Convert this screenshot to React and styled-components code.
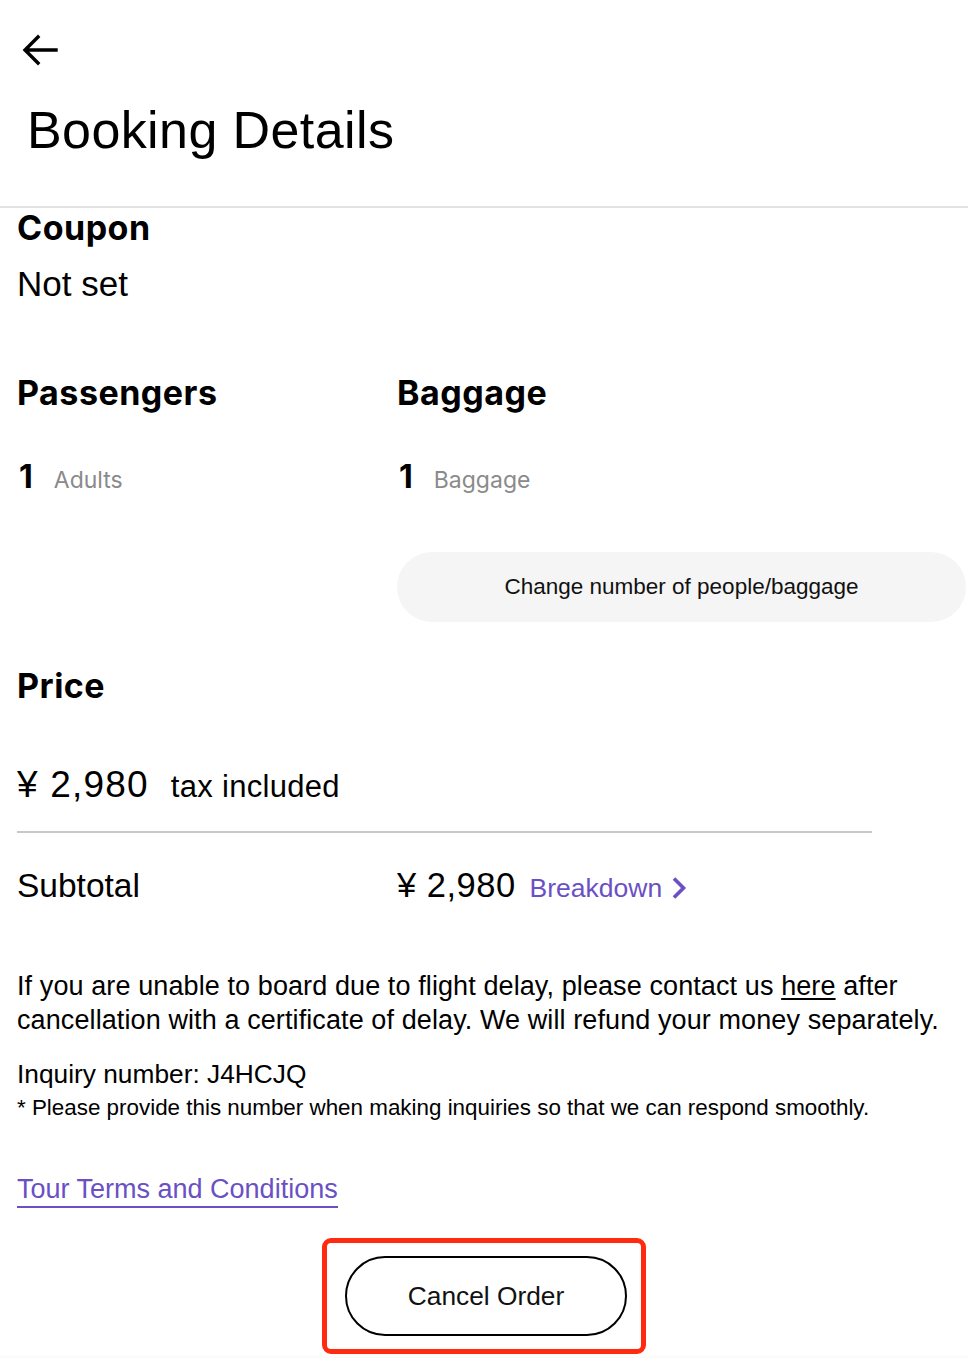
import React from "react";
import styled, { createGlobalStyle } from "styled-components";

const GlobalStyle = createGlobalStyle`
  body {
    margin: 0;
    background: #ffffff;
    color: #000000;
    font-family: "Liberation Sans", Arial, sans-serif;
  }
`;

const Page = styled.div`
  width: 968px;
  display: flex;
  flex-direction: column;
`;

const Header = styled.header`
  padding: 30px 0 40px;
  border-bottom: 2px solid #e2e2e2;
`;

const BackButton = styled.button`
  display: flex;
  align-items: center;
  justify-content: center;
  width: 40px;
  height: 40px;
  margin-left: 20px;
  padding: 0;
  border: none;
  background: none;
  cursor: pointer;
`;

const Title = styled.h1`
  margin: 24px 0 0 27px;
  font-size: 52px;
  font-weight: 400;
  line-height: 72px;
  letter-spacing: 0.4px;
`;

const Content = styled.main`
  padding: 0 2px 0 17px;
  display: flex;
  flex-direction: column;
`;

const Heading = styled.h2`
  margin: ${(p) => p.$top || 0}px 0 0;
  font-family: Inter, "Liberation Sans", sans-serif;
  font-size: 34px;
  font-weight: 700;
  line-height: 40px;
  letter-spacing: 0.5px;
`;

const Value = styled.div`
  margin-top: 16px;
  font-size: 35px;
  line-height: 40px;
`;

const Columns = styled.div`
  margin-top: 69px;
  display: grid;
  grid-template-columns: 380px 1fr;
`;

const Column = styled.div`
  display: flex;
  flex-direction: column;
`;

const CountRow = styled.div`
  margin-top: 44px;
  display: flex;
  align-items: baseline;
  gap: 21px;
  line-height: 40px;
  padding-left: 2px;
`;

const Count = styled.span`
  font-family: Inter, "Liberation Sans", sans-serif;
  font-size: 32px;
  font-weight: 700;
`;

const CountLabel = styled.span`
  font-family: Inter, "Liberation Sans", sans-serif;
  font-size: 23px;
  color: #8a8a8a;
`;

const PillButton = styled.button`
  margin-top: 52px;
  height: 70px;
  width: 100%;
  border: none;
  border-radius: 35px;
  background: #f5f5f5;
  font-family: "Liberation Sans", Arial, sans-serif;
  font-size: 22.5px;
  color: #111;
  cursor: pointer;
`;

const PriceRow = styled.div`
  margin-top: 55px;
  display: flex;
  align-items: baseline;
  gap: 22px;
  line-height: 48px;
`;

const Amount = styled.span`
  font-size: ${(p) => p.$size}px;
  letter-spacing: ${(p) => p.$spacing || 0.5}px;
`;

const TaxNote = styled.span`
  font-size: 31px;
  letter-spacing: 0.3px;
`;

const Rule = styled.hr`
  margin: 20px 0 0;
  width: 855px;
  border: none;
  border-top: 2px solid #c8c8c8;
`;

const SubtotalRow = styled.div`
  margin-top: 32px;
  display: grid;
  grid-template-columns: 380px 1fr;
  align-items: baseline;
  line-height: 40px;
`;

const SubtotalLabel = styled.span`
  font-size: 33.5px;
`;

const SubtotalValue = styled.div`
  display: flex;
  align-items: baseline;
  gap: 14px;
`;

const Breakdown = styled.a`
  display: inline-flex;
  align-items: center;
  gap: 8px;
  color: #6a50c4;
  font-size: 26.5px;
  text-decoration: none;
  cursor: pointer;
`;

const Paragraph = styled.p`
  margin: 61px 0 0;
  font-size: 27px;
  line-height: 34px;
  letter-spacing: 0.1px;
`;

const Underlined = styled.a`
  color: inherit;
  text-decoration: underline;
  text-underline-offset: 3px;
`;

const Inquiry = styled.div`
  margin-top: 20px;
  font-size: 26.3px;
  line-height: 34px;
`;

const Note = styled.div`
  margin-top: 2px;
  font-size: 22.4px;
  line-height: 30px;
`;

const TermsLink = styled.a`
  align-self: flex-start;
  margin-top: 51px;
  color: #6a50c4;
  font-size: 27px;
  line-height: 30px;
  padding-bottom: 2px;
  border-bottom: 2px solid #6a50c4;
  text-decoration: none;
  cursor: pointer;
`;

const Highlight = styled.div`
  align-self: center;
  margin: 30px 0 0 -15px;
  width: 324px;
  height: 116px;
  box-sizing: border-box;
  border: 5px solid #ff2a0f;
  border-radius: 9px;
  display: flex;
  align-items: center;
  justify-content: center;
  padding-left: 4px;
`;

const OutlineButton = styled.button`
  width: 282px;
  height: 80px;
  border: 2px solid #000;
  border-radius: 40px;
  background: #fff;
  font-family: "Liberation Sans", Arial, sans-serif;
  font-size: 26.3px;
  color: #111;
  cursor: pointer;
`;

const BottomFade = styled.div`
  height: 6px;
  background: linear-gradient(#ffffff, #f6f6f6);
`;

function ArrowLeft() {
  return (
    <svg width="38" height="34" viewBox="0 0 38 34" fill="none">
      <path
        d="M35 17H5M17 4L4 17l13 13"
        stroke="#000"
        strokeWidth="3.4"
        strokeLinecap="square"
      />
    </svg>
  );
}

function Chevron() {
  return (
    <svg width="18" height="26" viewBox="0 0 18 26" fill="none">
      <path d="M4 3.5l9.5 9.5L4 22.5" stroke="#6a50c4" strokeWidth="3.6" />
    </svg>
  );
}

export default function App() {
  return (
    <Page>
      <GlobalStyle />
      <Header>
        <BackButton aria-label="Back">
          <ArrowLeft />
        </BackButton>
        <Title>Booking Details</Title>
      </Header>
      <Content>
        <Heading>Coupon</Heading>
        <Value>Not set</Value>

        <Columns>
          <Column>
            <Heading>Passengers</Heading>
            <CountRow>
              <Count>1</Count>
              <CountLabel>Adults</CountLabel>
            </CountRow>
          </Column>
          <Column>
            <Heading>Baggage</Heading>
            <CountRow>
              <Count>1</Count>
              <CountLabel>Baggage</CountLabel>
            </CountRow>
            <PillButton>Change number of people/baggage</PillButton>
          </Column>
        </Columns>

        <Heading $top={44}>Price</Heading>
        <PriceRow>
          <Amount $size={37} $spacing={1.2}>¥ 2,980</Amount>
          <TaxNote>tax included</TaxNote>
        </PriceRow>
        <Rule />

        <SubtotalRow>
          <SubtotalLabel>Subtotal</SubtotalLabel>
          <SubtotalValue>
            <Amount $size={34.5}>¥ 2,980</Amount>
            <Breakdown>
              Breakdown
              <Chevron />
            </Breakdown>
          </SubtotalValue>
        </SubtotalRow>

        <Paragraph>
          If you are unable to board due to flight delay, please contact us{" "}
          <Underlined>here</Underlined> after cancellation with a certificate
          of delay. We will refund your money separately.
        </Paragraph>
        <Inquiry>Inquiry number: J4HCJQ</Inquiry>
        <Note>
          * Please provide this number when making inquiries so that we can
          respond smoothly.
        </Note>

        <TermsLink>Tour Terms and Conditions</TermsLink>

        <Highlight>
          <OutlineButton>Cancel Order</OutlineButton>
        </Highlight>
      </Content>
      <BottomFade />
    </Page>
  );
}
